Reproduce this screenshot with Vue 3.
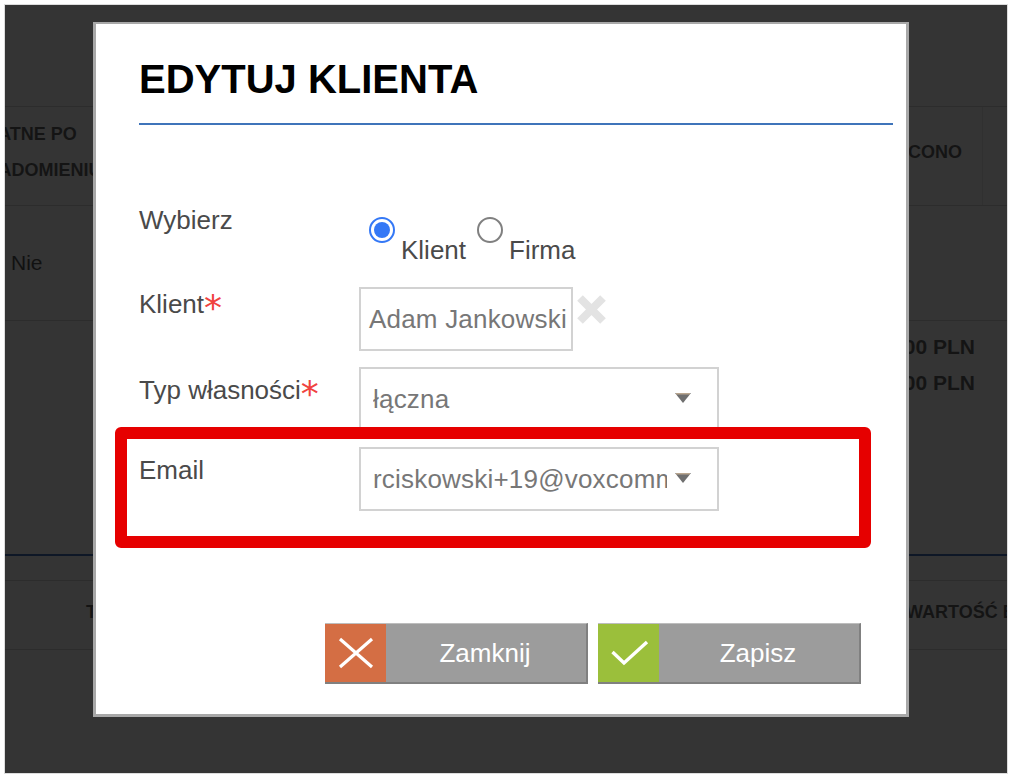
<script setup>
const amounts = ['1 000,00 PLN', '1 000,00 PLN']
</script>

<template>
  <div class="page">
    <div class="frame">
      <div class="table">
        <div class="row head">
          <div class="cell-left">PŁATNE PO<br />POWIADOMIENIU</div>
          <div class="cell-right"><span>ZAPŁACONO</span></div>
        </div>
        <div class="row body-row"><span class="nie">Nie</span></div>
        <div class="row sums">
          <div v-for="(a, i) in amounts" :key="i" class="sum">{{ a }}</div>
        </div>
        <div class="gap"></div>
        <div class="row foot">
          <div class="foot-a">TYP</div>
          <div class="foot-b">WARTOŚĆ BRUTTO</div>
        </div>
      </div>

      <div class="modal">
        <h1 class="title">EDYTUJ KLIENTA</h1>
        <div class="rule"></div>

        <div class="form-row choice">
          <div class="label">Wybierz</div>
          <div class="radios">
            <span class="radio on"><i></i></span><span class="radio-text">Klient</span>
            <span class="radio"></span><span class="radio-text">Firma</span>
          </div>
        </div>

        <div class="form-row client">
          <div class="label">Klient<b class="star">*</b></div>
          <div class="box short">Adam Jankowski</div>
          <svg class="clear" width="31" height="31" viewBox="0 0 31 31">
            <path d="M4 4 L27 27 M27 4 L4 27" stroke="#e3e3e3" stroke-width="8" fill="none" />
          </svg>
        </div>

        <div class="form-row">
          <div class="label">Typ własności<b class="star">*</b></div>
          <div class="box wide">
            <span class="value">łączna</span>
            <svg class="caret" width="16" height="10" viewBox="0 0 16 10">
              <polygon points="0,0 16,0 8,10" fill="#6f6f6f" />
              <rect x="1" y="0" width="14" height="1.5" fill="#b9a68f" />
            </svg>
          </div>
        </div>

        <div class="form-row">
          <div class="label">Email</div>
          <div class="box wide">
            <span class="value">rciskowski+19@voxcommerce.pl</span>
            <svg class="caret" width="16" height="10" viewBox="0 0 16 10">
              <polygon points="0,0 16,0 8,10" fill="#6f6f6f" />
              <rect x="1" y="0" width="14" height="1.5" fill="#b9a68f" />
            </svg>
          </div>
        </div>

        <div class="buttons">
          <button class="btn" type="button">
            <span class="ico red">
              <svg width="36" height="32" viewBox="0 0 36 32">
                <path d="M2 2 L34 30 M34 2 L2 30" stroke="#fff" stroke-width="3.2" fill="none" />
              </svg>
            </span>
            <span class="btn-text">Zamknij</span>
          </button>
          <button class="btn" type="button">
            <span class="ico green">
              <svg class="check" width="38" height="26" viewBox="0 0 38 26">
                <path d="M1.5 12 L13 23 L36 2" stroke="#fff" stroke-width="3.4" fill="none" />
              </svg>
            </span>
            <span class="btn-text">Zapisz</span>
          </button>
        </div>

        <div class="highlight"></div>
      </div>
    </div>
  </div>
</template>

<style>
html, body { margin: 0; background: #fff; }
</style>

<style scoped>
.page {
  width: 1012px;
  height: 778px;
  padding: 5px 5px 5px 5px;
  box-sizing: border-box;
  background: #fff;
  font-family: "Liberation Sans", Arial, sans-serif;
}
.frame {
  position: relative;
  width: 1002px;
  height: 768px;
  background: #343434;
  overflow: hidden;
  outline: 1px solid #dcdcdc;
}
.table {
  display: flex;
  flex-direction: column;
  padding-top: 101px;
  color: #141414;
  font-weight: 700;
  font-size: 18px;
  white-space: nowrap;
}
.row { border-top: 1px solid #2c2c2c; box-sizing: border-box; }
.head { height: 99px; display: flex; justify-content: space-between; align-items: stretch; }
.cell-left {
  width: 164px;
  margin-left: -61px;
  text-align: center;
  line-height: 36px;
  padding-top: 9px;
}
.cell-right {
  display: flex;
  align-items: center;
  box-sizing: border-box;
  padding: 0 21px 8px 0;
  width: 100px;
  justify-content: flex-end;
  border-right: 1px solid #303030;
  margin-right: 24px;
}
.cell-right span { margin-right: -1px; }
.body-row { height: 115px; padding: 43px 0 0 6px; }
.nie { font-weight: 400; font-size: 21px; line-height: 28px; color: #111; }
.sums {
  height: 236px;
  padding: 8px 32px 0 0;
  text-align: right;
  font-size: 21px;
  line-height: 36px;
  border-bottom: 2px solid #0e1726;
}
.gap { height: 24px; }
.foot {
  height: 70px;
  display: flex;
  align-items: center;
  padding: 0 0 5px 81px;
  border-bottom: 1px solid #2c2c2c;
}
.foot-a { width: 820px; flex: none; }
.foot-b { flex: none; }

.modal {
  position: absolute;
  left: 88px;
  top: 17px;
  width: 816px;
  height: 695px;
  box-sizing: border-box;
  border: 3px solid #a8a8a8;
  border-top-width: 2px;
  background: #fff;
  padding: 0 13px 0 43px;
  color: #4a4a4a;
  font-size: 26px;
}
.title {
  margin: 0;
  padding-top: 31px;
  font-size: 40px;
  line-height: 48px;
  font-weight: 700;
  color: #000;
}
.rule { margin-top: 20px; height: 2px; background: #3f74ba; }

.form-row {
  display: flex;
  align-items: flex-start;
  height: 64px;
  margin-top: 16px;
}
.label {
  width: 220px;
  flex: none;
  line-height: 30px;
  padding-top: 8px;
  white-space: nowrap;
}
.choice { margin-top: 80px; height: 66px; }
.choice .label { padding-top: 0; }
.client { margin-top: 16px; }
.client .label { padding-top: 2px; }
.star {
  color: #f0433f;
  font-family: "DejaVu Sans", sans-serif;
  font-weight: 400;
  font-size: 36px;
  line-height: 0;
  vertical-align: -7px;
}
.radios {
  display: flex;
  align-items: flex-start;
  margin-left: 10px;
  padding-top: 12px;
}
.radio {
  width: 26px;
  height: 26px;
  box-sizing: border-box;
  border: 2px solid #808080;
  border-radius: 50%;
  display: flex;
  align-items: center;
  justify-content: center;
  flex: none;
}
.radio.on { border-color: #3478f6; }
.radio.on i { width: 16px; height: 16px; border-radius: 50%; background: #3478f6; }
.radio-text { margin: 18px 11px 0 6px; line-height: 30px; }
.box {
  box-sizing: border-box;
  height: 64px;
  border: 2px solid #d2d2d2;
  color: #777;
  line-height: 60px;
  background: #fff;
  white-space: nowrap;
}
.short { width: 214px; padding-left: 8px; letter-spacing: 0.2px; overflow: hidden; }
.wide { width: 360px; padding-left: 12px; display: flex; align-items: flex-start; }
.value { width: 294px; flex: none; overflow: hidden; letter-spacing: 0.2px; }
.caret { margin: 24px 0 0 8px; flex: none; filter: blur(0.6px); }
.clear { margin: 7px 0 0 3px; flex: none; }

.buttons {
  display: flex;
  justify-content: flex-end;
  gap: 10px;
  margin-top: 112px;
  padding-right: 32px;
}
.btn {
  width: 263px;
  height: 61px;
  display: flex;
  padding: 0;
  box-sizing: border-box;
  border: 0;
  border-top: 1px solid #bdbdbd;
  border-right: 2px solid #808080;
  border-bottom: 2px solid #808080;
  background: #9c9c9c;
  color: #fff;
  font: 26px "Liberation Sans", Arial, sans-serif;
}
.ico {
  width: 61px;
  height: 58px;
  flex: none;
  display: flex;
  align-items: center;
  justify-content: center;
}
.red { background: #d46e44; }
.green { background: #9bbf3b; }
.check { margin-left: 2px; }
.btn-text { flex: 1; text-align: center; line-height: 58px; padding-right: 2px; }

.highlight {
  position: absolute;
  left: 19px;
  top: 403px;
  width: 756px;
  height: 121px;
  box-sizing: border-box;
  border: 12px solid #e60000;
  border-radius: 6px;
  pointer-events: none;
}
</style>
